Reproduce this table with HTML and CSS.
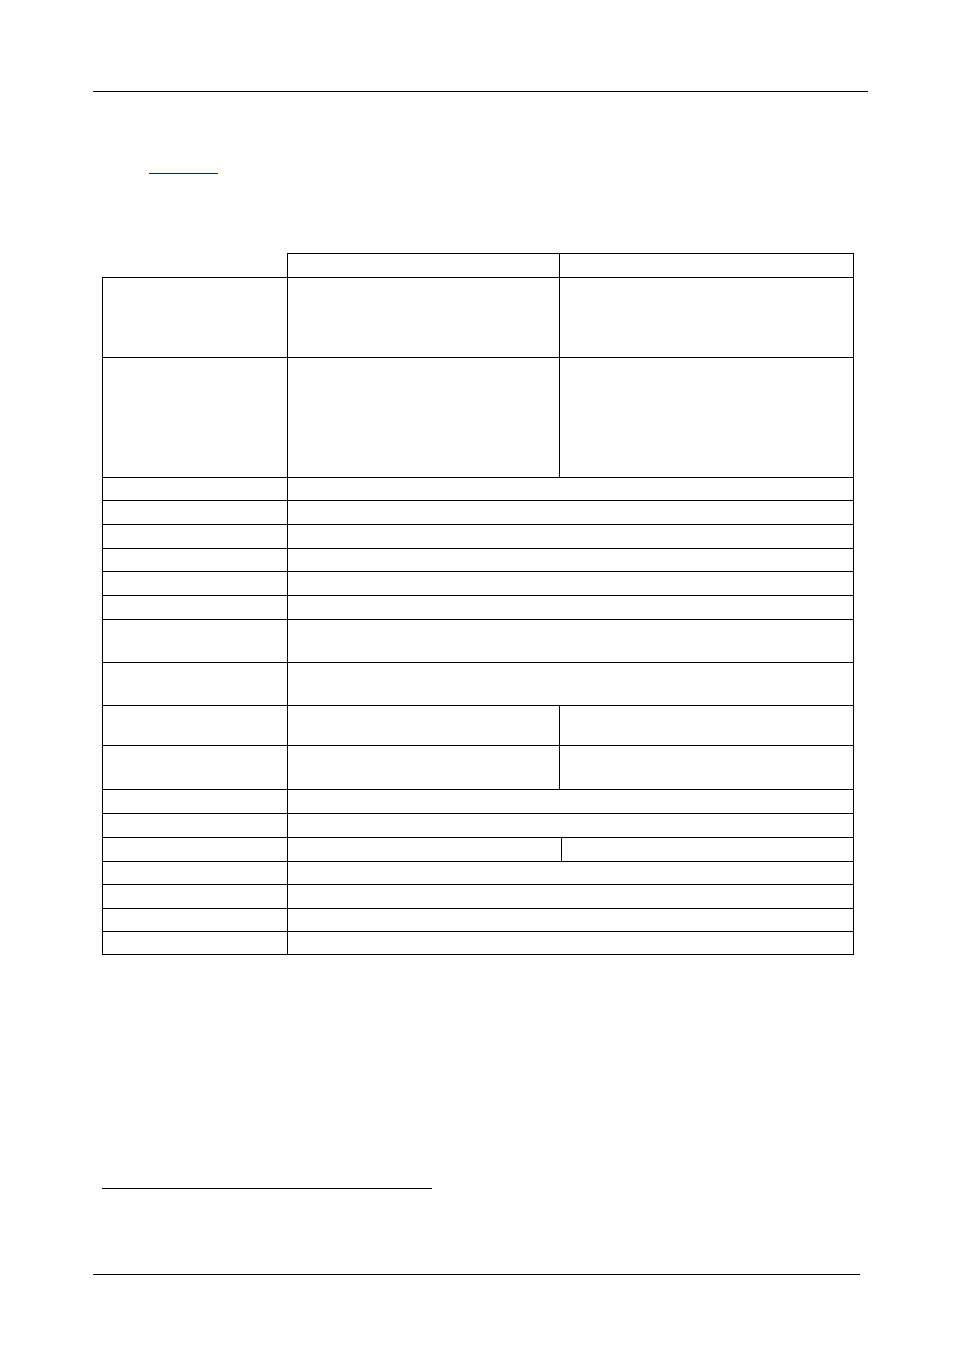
FILE: index.html
```html
<!DOCTYPE html>
<html lang="en">
<head>
<meta charset="utf-8">
<title>Document page</title>
<link rel="stylesheet" href="styles.css">
</head>
<body>
<div class="page">
  <div class="header-rule"></div>
  <div class="link-line"><a class="blank-link" href="#"></a></div>
  <div class="spec-table">
    <div class="cell corner"></div>
    <div class="cell head span-b"></div>
    <div class="cell head span-cd"></div>

    <div class="cell label r80"></div><div class="cell span-b r80"></div><div class="cell span-cd r80"></div>
    <div class="cell label r120"></div><div class="cell span-b r120"></div><div class="cell span-cd r120"></div>
    <div class="cell label r23"></div><div class="cell span-all r23"></div>
    <div class="cell label r24"></div><div class="cell span-all r24"></div>
    <div class="cell label r24"></div><div class="cell span-all r24"></div>
    <div class="cell label r23"></div><div class="cell span-all r23"></div>
    <div class="cell label r24"></div><div class="cell span-all r24"></div>
    <div class="cell label r24"></div><div class="cell span-all r24"></div>
    <div class="cell label r43"></div><div class="cell span-all r43"></div>
    <div class="cell label r43"></div><div class="cell span-all r43"></div>
    <div class="cell label r40"></div><div class="cell span-b r40"></div><div class="cell span-cd r40"></div>
    <div class="cell label r44"></div><div class="cell span-b r44"></div><div class="cell span-cd r44"></div>
    <div class="cell label r24"></div><div class="cell span-all r24"></div>
    <div class="cell label r24"></div><div class="cell span-all r24"></div>
    <div class="cell label r24"></div><div class="cell span-bc r24"></div><div class="cell span-d r24"></div>
    <div class="cell label r23"></div><div class="cell span-all r23"></div>
    <div class="cell label r24"></div><div class="cell span-all r24"></div>
    <div class="cell label r23"></div><div class="cell span-all r23"></div>
    <div class="cell label r23"></div><div class="cell span-all r23"></div>
  </div>
  <div class="footnote-rule"></div>
  <div class="footer-rule"></div>
</div>
</body>
</html>
```
FILE: styles.css
```css
* { box-sizing: border-box; }
html, body { margin: 0; padding: 0; background: #ffffff; }
body { font-family: "Liberation Sans", Arial, sans-serif; color: #000; }

.page {
  width: 954px;
  min-height: 1355px;
  padding-top: 91px;
}

.header-rule {
  margin-left: 93px;
  width: 775px;
  height: 1px;
  background: #000;
}

.link-line {
  margin-top: 81px;
  margin-left: 149px;
  height: 1px;
  display: flex;
}
.blank-link {
  display: block;
  width: 69px;
  height: 1px;
  background: #0000ff;
}

.spec-table {
  margin-top: 79px;
  margin-left: 102px;
  display: grid;
  grid-template-columns: 186px 272px 2px 292px;
  width: 752px;
}

.cell {
  border-right: 1px solid #000;
  border-bottom: 1px solid #000;
}
.corner { grid-column: 1; height: 25px; border-right: 1px solid #000; border-bottom: 1px solid #000; }
.head { height: 25px; border-top: 1px solid #000; }
.label { grid-column: 1; border-left: 1px solid #000; }
.span-b { grid-column: 2; }
.span-cd { grid-column: 3 / span 2; }
.span-bc { grid-column: 2 / span 2; }
.span-d { grid-column: 4; }
.span-all { grid-column: 2 / span 3; }

.r23 { height: 23px; }
.r24 { height: 24px; }
.r40 { height: 40px; }
.r43 { height: 43px; }
.r44 { height: 44px; }
.r80 { height: 80px; }
.r120 { height: 120px; }

.footnote-rule {
  margin-top: 233px;
  margin-left: 102px;
  width: 330px;
  height: 1px;
  background: #000;
}

.footer-rule {
  margin-top: 85px;
  margin-left: 93px;
  width: 767px;
  height: 1px;
  background: #000;
}
```
